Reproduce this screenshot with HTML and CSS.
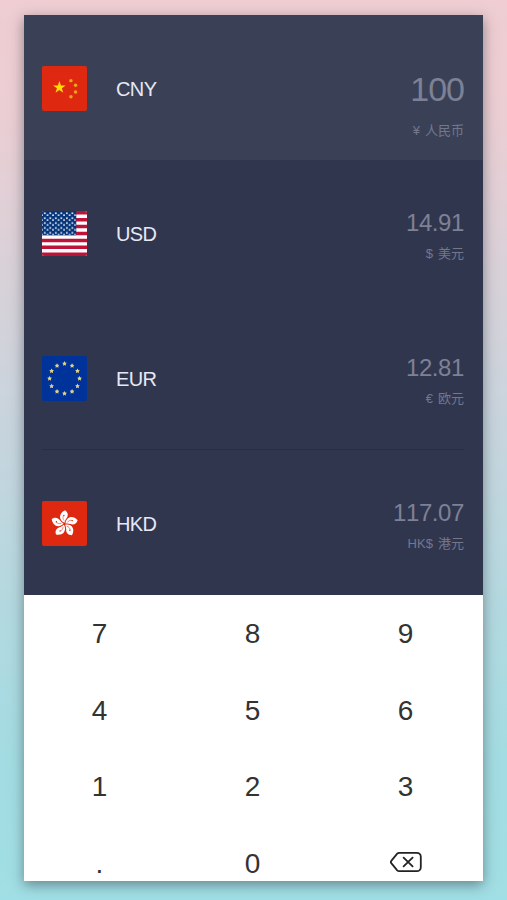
FILE: index.html
```html
<!DOCTYPE html>
<html lang="zh-CN">
<head>
    <meta charset="UTF-8">
    <meta name="viewport" content="width=device-width, initial-scale=1.0">
    <title>汇率换算</title>
    <link rel="stylesheet" href="styles.css">
</head>
<body>
    <main class="converter">
        <section class="currency-list">
            <div class="currency active">
                <svg class="flag" viewBox="0 0 44 44">
                    <rect width="44" height="44" fill="#de2910"/>
                    <path fill="#ffde00" d="M17 14.6l1.5 4.4h4.6l-3.7 2.8 1.4 4.4-3.8-2.7-3.8 2.7 1.4-4.4-3.7-2.8h4.6z"/>
                    <g fill="#f0a51c">
                        <circle cx="28.3" cy="14.3" r="1.7"/>
                        <circle cx="32.8" cy="18.8" r="1.7"/>
                        <circle cx="32.8" cy="25.4" r="1.7"/>
                        <circle cx="28.3" cy="30" r="1.7"/>
                    </g>
                </svg>
                <span class="code">CNY</span>
                <div class="amount">
                    <div class="value">100</div>
                    <div class="unit">¥ 人民币</div>
                </div>
            </div>
            <div class="currency">
                <svg class="flag" viewBox="0 0 44 44">
                    <defs>
                        <pattern id="stars" width="5.4" height="4.8" patternUnits="userSpaceOnUse">
                            <circle cx="2.7" cy="2.2" r="0.9" fill="#f0f4fc"/>
                            <circle cx="0" cy="4" r="0.9" fill="#f0f4fc"/>
                            <circle cx="5.4" cy="4" r="0.9" fill="#f0f4fc"/>
                        </pattern>
                    </defs>
                    <rect width="44" height="44" fill="#fff"/>
                    <path stroke="#bf1238" stroke-width="3.385" d="M0 1.69h44M0 8.46h44M0 15.23h44M0 22h44M0 28.77h44M0 35.54h44M0 42.31h44"/>
                    <rect width="33.5" height="23.7" fill="#07357a"/>
                    <rect width="33" height="23.5" fill="url(#stars)"/>
                </svg>
                <span class="code">USD</span>
                <div class="amount">
                    <div class="value">14.91</div>
                    <div class="unit">$ 美元</div>
                </div>
            </div>
            <div class="currency divided">
                <svg class="flag" viewBox="0 0 44 44">
                    <defs>
                        <path id="star" fill="#e0d48a" d="M0-2.4L.8-.9 2.3-.7 1.2.5 1.5 2.1 0 1.3-1.5 2.1-1.2.5-2.3-.7-.8-.9z"/>
                    </defs>
                    <rect width="44" height="44" fill="#039"/>
                    <use href="#star" x="22" y="7.4"/>
                    <use href="#star" x="29.4" y="9.4"/>
                    <use href="#star" x="34.7" y="14.7"/>
                    <use href="#star" x="36.7" y="22"/>
                    <use href="#star" x="34.7" y="29.4"/>
                    <use href="#star" x="29.4" y="34.7"/>
                    <use href="#star" x="22" y="36.7"/>
                    <use href="#star" x="14.7" y="34.7"/>
                    <use href="#star" x="9.4" y="29.4"/>
                    <use href="#star" x="7.4" y="22"/>
                    <use href="#star" x="9.4" y="14.7"/>
                    <use href="#star" x="14.7" y="9.4"/>
                </svg>
                <span class="code">EUR</span>
                <div class="amount">
                    <div class="value">12.81</div>
                    <div class="unit">€ 欧元</div>
                </div>
            </div>
            <div class="currency">
                <svg class="flag" viewBox="0 0 44 44">
                    <defs>
                        <g id="petal">
                            <path fill="#fff" d="M0-1C-5.6-3.4-6.2-10.2.6-13.3 3.8-10.9 3.9-7.9 2-5.5 1-4.1.3-2.8 0-1z"/>
                            <path fill="none" stroke="#de2910" stroke-width="0.5" d="M-.4-3c-1.4-1.8-1.4-3.5-.5-5"/>
                            <circle cx="-.6" cy="-8.2" r="0.7" fill="#de2910"/>
                        </g>
                    </defs>
                    <rect width="44" height="44" fill="#de2910"/>
                    <g transform="translate(22 22.3)">
                        <use href="#petal"/>
                        <use href="#petal" transform="rotate(72)"/>
                        <use href="#petal" transform="rotate(144)"/>
                        <use href="#petal" transform="rotate(216)"/>
                        <use href="#petal" transform="rotate(288)"/>
                    </g>
                </svg>
                <span class="code">HKD</span>
                <div class="amount">
                    <div class="value">117.07</div>
                    <div class="unit">HK$ 港元</div>
                </div>
            </div>
        </section>
        <section class="keypad">
            <button type="button">7</button>
            <button type="button">8</button>
            <button type="button">9</button>
            <button type="button">4</button>
            <button type="button">5</button>
            <button type="button">6</button>
            <button type="button">1</button>
            <button type="button">2</button>
            <button type="button">3</button>
            <button type="button">.</button>
            <button type="button">0</button>
            <button type="button" aria-label="删除">
                <svg class="backspace" viewBox="0 0 32 22">
                    <path d="M9.2 1.8h17.6a4 4 0 0 1 4 4v10.4a4 4 0 0 1-4 4H9.2a3 3 0 0 1-2-.9L1.5 12.4a2 2 0 0 1 0-2.8l5.7-6.9a3 3 0 0 1 2-.9z"/>
                    <path d="M13.6 6.6l9 8.8M22.6 6.6l-9 8.8"/>
                </svg>
            </button>
        </section>
    </main>
</body>
</html>
```
FILE: styles.css
```css
* {
    margin: 0;
    padding: 0;
    box-sizing: border-box;
}

body {
    height: 100vh;
    overflow: hidden;
    padding: 15px 24px 19px;
    font-family: "Liberation Sans", "Noto Sans CJK SC", sans-serif;
    font-kerning: none;
    background: linear-gradient(#efcdd2 0%, #ebced3 12%, #c9d4dd 46%, #a3dce2 84%, #a0dfe5 100%);
}

.converter {
    width: 459px;
    height: 866px;
    overflow: hidden;
    background-color: #fff;
    box-shadow: 0 4px 12px rgba(40, 50, 60, 0.5);
}

.currency-list {
    height: 580px;
    background-color: #31364f;
}

.currency {
    display: flex;
    align-items: center;
    height: 145px;
    padding: 2px 19px 0 18px;
}

.active {
    background-color: #3a4157;
}

.divided {
    background: linear-gradient(#2a2e42, #2a2e42) 18px 100% / 422px 1px no-repeat;
}

.flag {
    width: 45px;
    height: 45px;
    border-radius: 2px;
}

.code {
    margin-left: 29px;
    padding-top: 2px;
    font-size: 20px;
    letter-spacing: -0.6px;
    color: #e6e8f6;
}

.amount {
    margin-left: auto;
    padding-top: 9px;
    text-align: right;
    color: #7d8196;
}

.value {
    font-size: 24px;
    line-height: 32px;
    letter-spacing: -0.4px;
}

.active .value {
    font-size: 34px;
    line-height: 44px;
    letter-spacing: -1px;
}

.active .amount {
    padding-top: 40px;
}

.unit {
    font-size: 13px;
    line-height: 30px;
    word-spacing: 1.5px;
    color: #73778c;
}

.active .unit {
    line-height: 40px;
}

.keypad {
    display: grid;
    grid-template-columns: repeat(3, 153px);
    grid-auto-rows: 76.5px;
}

.keypad button {
    display: flex;
    align-items: center;
    justify-content: center;
    padding: 2px 2px 0 0;
    border: none;
    background: none;
    font-family: inherit;
    font-size: 28px;
    color: #333;
}

.backspace {
    width: 32px;
    height: 22px;
    margin-top: -3px;
    fill: none;
    stroke: #222;
    stroke-width: 1.8;
    stroke-linecap: round;
}
```
